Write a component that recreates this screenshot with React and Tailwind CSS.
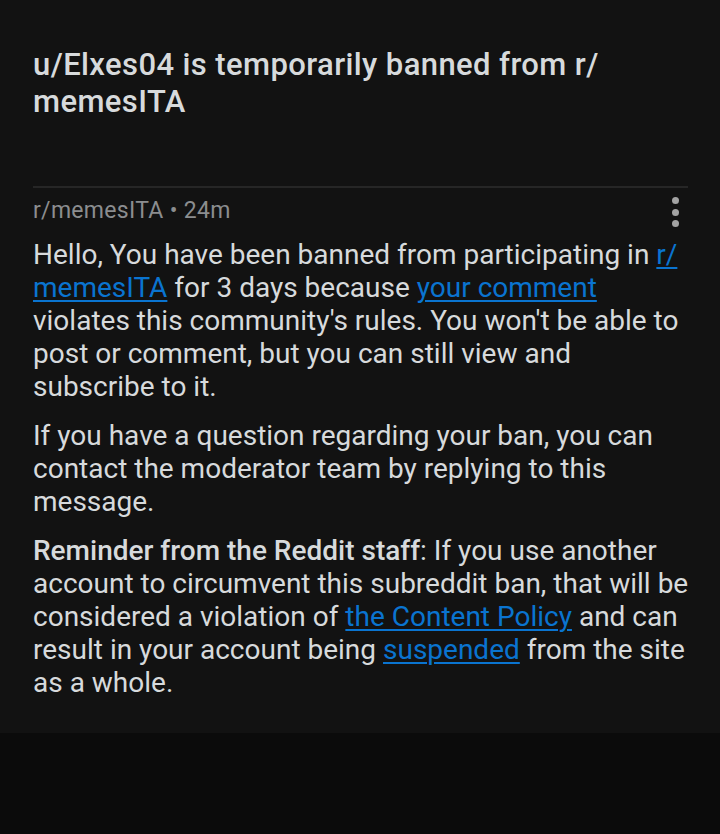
export default function App() {
  const link = "text-[#0a74d0] underline decoration-[1.5px] underline-offset-[3px]";
  return (
    <div className="w-[720px] h-[834px] bg-[#0b0b0b] flex flex-col" style={{ fontFamily: "Roboto, 'Liberation Sans', sans-serif" }}>
      <div className="bg-[#121212] pl-[33px] pr-[32px] pt-[46px] pb-[34px]">
        <h1 className="text-[31px] leading-[37px] font-medium text-[#d7dadc] tracking-[0.4px]">
          u/Elxes04 is temporarily banned from r/
          <br />
          memesITA
        </h1>
        <div className="mt-[66px] h-[2px] bg-[#262626]" />
        <div className="mt-[7px] flex items-center justify-between">
          <span className="text-[23px] leading-[28px] text-[#8b8d8f] tracking-[0.3px]">r/memesITA • 24m</span>
          <div className="flex flex-col gap-[4.5px] mr-[9px] mt-[2px]">
            <span className="w-[7px] h-[7px] rounded-full bg-[#a3a3a3]" />
            <span className="w-[7px] h-[7px] rounded-full bg-[#a3a3a3]" />
            <span className="w-[7px] h-[7px] rounded-full bg-[#a3a3a3]" />
          </div>
        </div>
        <div className="mt-[11px] mr-[-8px] text-[28px] leading-[33px] text-[#d7dadc] flex flex-col gap-[16px]">
          <p>
            Hello, You have been banned from participating in <span className={link}>r/<br />memesITA</span> for 3 days because <span className={link}>your comment</span> violates this community's rules. You won't be able to post or comment, but you can still view and subscribe to it.
          </p>
          <p>
            If you have a question regarding your ban, you can contact the moderator team by replying to this message.
          </p>
          <p>
            <span className="font-medium">Reminder from the Reddit staff</span>: If you use another account to circumvent this subreddit ban, that will be considered a violation of <span className={link}>the Content Policy</span> and can result in your account being <span className={link}>suspended</span> from the site as a whole.
          </p>
        </div>
      </div>
    </div>
  );
}
